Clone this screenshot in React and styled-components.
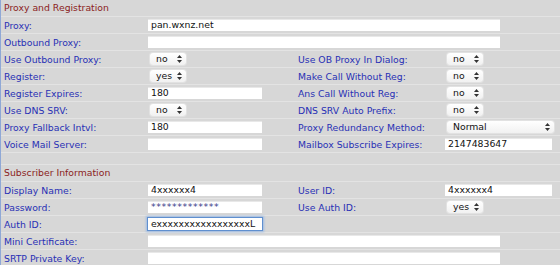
import React from "react";
import styled, { createGlobalStyle } from "styled-components";

const GlobalStyle = createGlobalStyle`
  html, body {
    margin: 0;
    padding: 0;
    background: #d7d7d7;
  }
`;

const Page = styled.div`
  width: 560px;
  height: 265px;
  overflow: hidden;
  background: #d7d7d7;
  border-left: 1px solid #8fa8d6;
  box-sizing: border-box;
  font-family: "DejaVu Sans", Verdana, sans-serif;
  font-size: 9.3px;
`;

const SectionTitle = styled.div`
  height: 16px;
  line-height: 16px;
  padding-left: 3px;
  color: #8b1d1d;
  border-bottom: 1px solid #e3e3e3;
`;

const Row = styled.div`
  display: grid;
  grid-template-columns: 147px 150px 147px 1fr;
  align-items: center;
  height: 16px;
  border-bottom: 1px solid #e3e3e3;
`;

const Spacer = styled.div`
  height: ${(p) => p.h}px;
  border-bottom: 1px solid #e3e3e3;
`;

const Label = styled.div`
  color: #2830b5;
  padding-left: ${(p) => (p.right ? 0 : 3)}px;
  white-space: nowrap;
`;

const Cell = styled.div`
  grid-column: ${(p) => (p.wide ? "2 / 5" : "auto")};
  display: flex;
  align-items: center;
`;

const Input = styled.div`
  width: ${(p) => p.w}px;
  height: 12px;
  line-height: 12px;
  background: #fff;
  color: ${(p) => (p.secret ? "#3a3a8a" : "#111")};
  padding-left: 3px;
  box-sizing: border-box;
  white-space: nowrap;
  overflow: hidden;
  box-shadow: ${(p) =>
    p.focus ? "0 0 0 1px #5f8fcf, 0 0 2px 2px #9dbbe3" : "inset 0 1px 0 #e8e8e8"};
  letter-spacing: ${(p) => (p.secret ? "0.6px" : "0")};
`;

const Select = styled.div`
  width: ${(p) => p.w}px;
  height: 12px;
  line-height: 12px;
  background: linear-gradient(#ffffff, #f1f1f1);
  border-radius: 3px;
  box-shadow: 0 0 0 1px #e2e2e2;
  color: #111;
  display: flex;
  align-items: center;
  justify-content: space-between;
  padding: 0 4px 0 6px;
  box-sizing: border-box;
  margin-left: 2px;
`;

const Arrows = () => (
  <svg width="5" height="8" viewBox="0 0 5 8">
    <path d="M2.5 0 L5 3 L0 3 Z" fill="#333" />
    <path d="M2.5 8 L5 5 L0 5 Z" fill="#333" />
  </svg>
);

const Sel = ({ value, w = 36 }) => (
  <Select w={w}>
    <span>{value}</span>
    <Arrows />
  </Select>
);

const Field = ({ label, children, right, rightChild }) => (
  <Row>
    <Label>{label}</Label>
    <Cell>{children}</Cell>
    <Label right>{right}</Label>
    <Cell>{rightChild}</Cell>
  </Row>
);

const WideField = ({ label, value }) => (
  <Row>
    <Label>{label}</Label>
    <Cell wide>
      <Input w={352}>{value}</Input>
    </Cell>
  </Row>
);

export default function App() {
  return (
    <Page>
      <GlobalStyle />
      <SectionTitle>Proxy and Registration</SectionTitle>
      <WideField label="Proxy:" value="pan.wxnz.net" />
      <WideField label="Outbound Proxy:" value="" />
      <Field label="Use Outbound Proxy:" right="Use OB Proxy In Dialog:" rightChild={<Sel value="no" />}>
        <Sel value="no" />
      </Field>
      <Field label="Register:" right="Make Call Without Reg:" rightChild={<Sel value="no" />}>
        <Sel value="yes" />
      </Field>
      <Field label="Register Expires:" right="Ans Call Without Reg:" rightChild={<Sel value="no" />}>
        <Input w={114}>180</Input>
      </Field>
      <Field label="Use DNS SRV:" right="DNS SRV Auto Prefix:" rightChild={<Sel value="no" />}>
        <Sel value="no" />
      </Field>
      <Field
        label="Proxy Fallback Intvl:"
        right="Proxy Redundancy Method:"
        rightChild={<Sel value="Normal" w={107} />}
      >
        <Input w={114}>180</Input>
      </Field>
      <Field
        label="Voice Mail Server:"
        right="Mailbox Subscribe Expires:"
        rightChild={<Input w={107}>2147483647</Input>}
      >
        <Input w={114} />
      </Field>
      <Spacer h={11} />
      <SectionTitle>Subscriber Information</SectionTitle>
      <Field label="Display Name:" right="User ID:" rightChild={<Input w={107}>4xxxxxx4</Input>}>
        <Input w={114}>4xxxxxx4</Input>
      </Field>
      <Field label="Password:" right="Use Auth ID:" rightChild={<Sel value="yes" />}>
        <Input w={114} secret>
          *************
        </Input>
      </Field>
      <Field label="Auth ID:">
        <Input w={114} focus>
          exxxxxxxxxxxxxxxxxL
        </Input>
      </Field>
      <WideField label="Mini Certificate:" value="" />
      <WideField label="SRTP Private Key:" value="" />
    </Page>
  );
}
